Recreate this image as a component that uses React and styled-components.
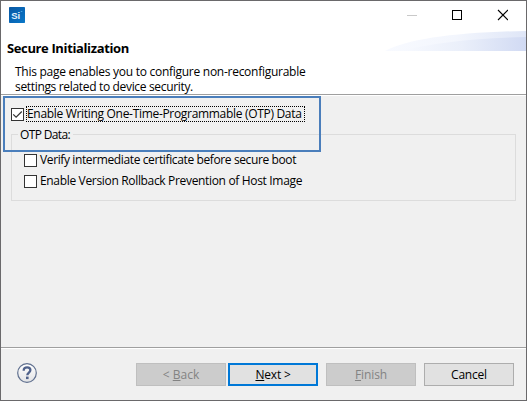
import React from "react";
import styled, { createGlobalStyle } from "styled-components";

const GlobalStyle = createGlobalStyle`
  *, *::before, *::after { box-sizing: border-box; }
  body { margin: 0; overflow: hidden; }
`;

const Dialog = styled.div`
  position: relative;
  display: flex;
  flex-direction: column;
  width: 527px;
  height: 401px;
  border: 1px solid #6a696b;
  background: #f0f0f0;
  color: #000;
  font: 12px/15px "Open Sans", "Noto Sans", sans-serif;
`;

const TitleBar = styled.header`
  display: flex;
  flex: none;
  align-items: center;
  justify-content: space-between;
  height: 30px;
  padding: 0 18px 0 8px;
  background: #fff;
`;

const AppIcon = styled.svg`
  display: block;
  width: 16px;
  height: 16px;
  margin-top: -2px;
`;

const WindowControls = styled.svg`
  display: block;
  width: 102px;
  height: 12px;
  margin-top: -2px;
`;

const Banner = styled.section`
  position: relative;
  flex: none;
  height: 65px;
  padding: 9px 0 0 6px;
  background: #fff;
  border-bottom: 1px solid #fff;
  box-shadow: inset 0 -1px 0 #9f9f9f;
`;

const Swoosh = styled.svg`
  position: absolute;
  top: 0;
  right: 0;
  width: 141px;
  height: 20px;
`;

const Label = styled.span`
  display: block;
  white-space: pre;
  letter-spacing: ${({ $track = 0 }) => $track}px;
`;

const Title = styled.h1`
  margin: 0;
  font-size: 13px;
  font-weight: 700;
  line-height: 16px;
  letter-spacing: -0.37px;
`;

const Description = styled.div`
  display: flex;
  flex-direction: column;
  padding: 8px 0 0 8px;
  line-height: 15px;
`;

const Content = styled.main`
  flex: 1;
  padding: 10px 10px 0;
`;

const Option = styled.label`
  display: flex;
  align-items: center;
  height: 16px;
`;

const CheckBox = styled.span`
  display: block;
  flex: none;
  width: 13px;
  height: 13px;
  border: 1px solid #333;
  background: #fff;
  svg { display: block; }
`;

const OptionText = styled.span`
  height: 16px;
  margin-left: 2px;
  padding: 0;
  border: 1px dotted ${({ $focused }) => ($focused ? "#000" : "transparent")};
  line-height: 14px;
  width: ${({ $focused }) => ($focused ? "279px" : "auto")};
`;

const Group = styled.fieldset`
  display: flex;
  flex-direction: column;
  gap: 5px;
  height: 74px;
  margin: 5px 0 0;
  padding: 10px 0 0 12px;
  border: 1px solid #dcdcdc;
  min-width: 0;
`;

const Legend = styled.legend`
  height: 15px;
  margin-left: -6px;
  padding: 0 3px 0 2px;
  line-height: 16px;
`;

const Annotation = styled.div`
  position: absolute;
  left: 2px;
  top: 95px;
  width: 318px;
  height: 56px;
  border: 2px solid #4a7ebb;
`;

const Footer = styled.footer`
  display: flex;
  flex: none;
  align-items: flex-start;
  height: 53px;
  padding: 15px 12px 0 16px;
  border-top: 1px solid #9f9f9f;
  box-shadow: inset 0 1px 0 #fff;
`;

const HelpIcon = styled.svg`
  width: 20px;
  height: 20px;
  margin-right: auto;
`;

const Button = styled.button`
  display: flex;
  align-items: center;
  justify-content: center;
  width: 90px;
  height: 23px;
  margin-left: ${({ $gap = 8 }) => $gap}px;
  padding: 0;
  border: ${({ $primary }) => ($primary ? "2px solid #0078d7" : "1px solid #adadad")};
  background: #e1e1e1;
  color: #000;
  font: inherit;
  &:disabled {
    border-color: #bfbfbf;
    background: #ccc;
    color: #838383;
  }
`;

const Mnemonic = styled.span`
  text-decoration: underline;
  text-decoration-thickness: 1px;
  text-underline-offset: 1px;
`;

function Check({ checked, focused, track, children }) {
  return (
    <Option>
      <CheckBox role="checkbox" aria-checked={!!checked}>
        {checked && (
          <svg width="11" height="11" viewBox="0 0 11 11">
            <path d="M1.2 5.3 4.1 8.2 9.8 2.5" fill="none" stroke="#333" strokeWidth="1.2" />
          </svg>
        )}
      </CheckBox>
      <OptionText $focused={focused}>
        <Label $track={track}>{children}</Label>
      </OptionText>
    </Option>
  );
}

export default function App() {
  return (
    <>
      <GlobalStyle />
      <Dialog>
        <TitleBar>
          <AppIcon viewBox="0 0 16 16">
            <defs>
              <linearGradient id="tile" x1="0" y1="0" x2="1" y2="1">
                <stop offset="0" stopColor="#0a58a2" />
                <stop offset="0.55" stopColor="#0868b8" />
                <stop offset="1" stopColor="#0a78c8" />
              </linearGradient>
            </defs>
            <rect width="16" height="16" rx="0.7" fill="url(#tile)" />
            <text x="2.2" y="11.6" fill="#e2f1fc" fontFamily="Liberation Sans, sans-serif" fontWeight="700" fontSize="9.5">Si</text>
            <path d="M11.8 4.5h1.5" stroke="#49a8e6" />
          </AppIcon>
          <WindowControls viewBox="0 0 102 12">
            <path d="M1 6.5h10" stroke="#c9c9c9" />
            <rect x="46.5" y="1.5" width="9" height="9" fill="none" stroke="#000" />
            <path d="M92 1l10 10M102 1 92 11" stroke="#000" strokeWidth="1.1" />
          </WindowControls>
        </TitleBar>
        <Banner>
          <Swoosh viewBox="0 0 141 20">
            <defs>
              <linearGradient id="outer">
                <stop offset="0" stopColor="#f8faff" />
                <stop offset="0.5" stopColor="#f3f6fd" />
                <stop offset="1" stopColor="#dfe6f7" />
              </linearGradient>
              <linearGradient id="inner">
                <stop offset="0" stopColor="#f8faff" />
                <stop offset="0.5" stopColor="#eaeffa" />
                <stop offset="1" stopColor="#d1daf3" />
              </linearGradient>
            </defs>
            <path d="M0 20C22 8 73 1 141 0V20Z" fill="url(#outer)" />
            <path d="M14 20C48 12 90 7 141 6V20Z" fill="url(#inner)" />
          </Swoosh>
          <Title>Secure Initialization</Title>
          <Description>
            <Label $track={-0.27}>This page enables you to configure non-reconfigurable</Label>
            <Label $track={-0.33}>settings related to device security.</Label>
          </Description>
        </Banner>
        <Content>
          <Check checked focused track={-0.31}>Enable Writing One-Time-Programmable (OTP) Data</Check>
          <Group>
            <Legend><Label $track={-0.65}>OTP Data:</Label></Legend>
            <Check track={-0.38}>Verify intermediate certificate before secure boot</Check>
            <Check track={-0.33}>Enable Version Rollback Prevention of Host Image</Check>
          </Group>
        </Content>
        <Footer>
          <HelpIcon viewBox="0 0 20 20">
            <defs>
              <linearGradient id="help" x1="0" y1="0" x2="0" y2="1">
                <stop offset="0" stopColor="#fff" />
                <stop offset="1" stopColor="#e2e3e5" />
              </linearGradient>
            </defs>
            <circle cx="10" cy="10" r="9.3" fill="url(#help)" stroke="#60708f" strokeWidth="1.2" />
            <path d="M6.7 7.7C6.6 5.4 8 4.3 10.1 4.3S13.4 5.4 13.4 7.1C13.4 9.5 10.3 9.6 10.3 12.3" fill="none" stroke="#50628b" strokeWidth="2.3" />
            <path d="M9 13.6h2.6v2.5H9Z" fill="#50628b" />
          </HelpIcon>
          <Button disabled><Label>{"< "}<Mnemonic>B</Mnemonic>ack</Label></Button>
          <Button $gap={2} $primary><Label $track={-0.2}><Mnemonic>N</Mnemonic>ext &gt;</Label></Button>
          <Button disabled><Label $track={-0.1}><Mnemonic>F</Mnemonic>inish</Label></Button>
          <Button><Label $track={-0.2}>Cancel</Label></Button>
        </Footer>
        <Annotation />
      </Dialog>
    </>
  );
}
